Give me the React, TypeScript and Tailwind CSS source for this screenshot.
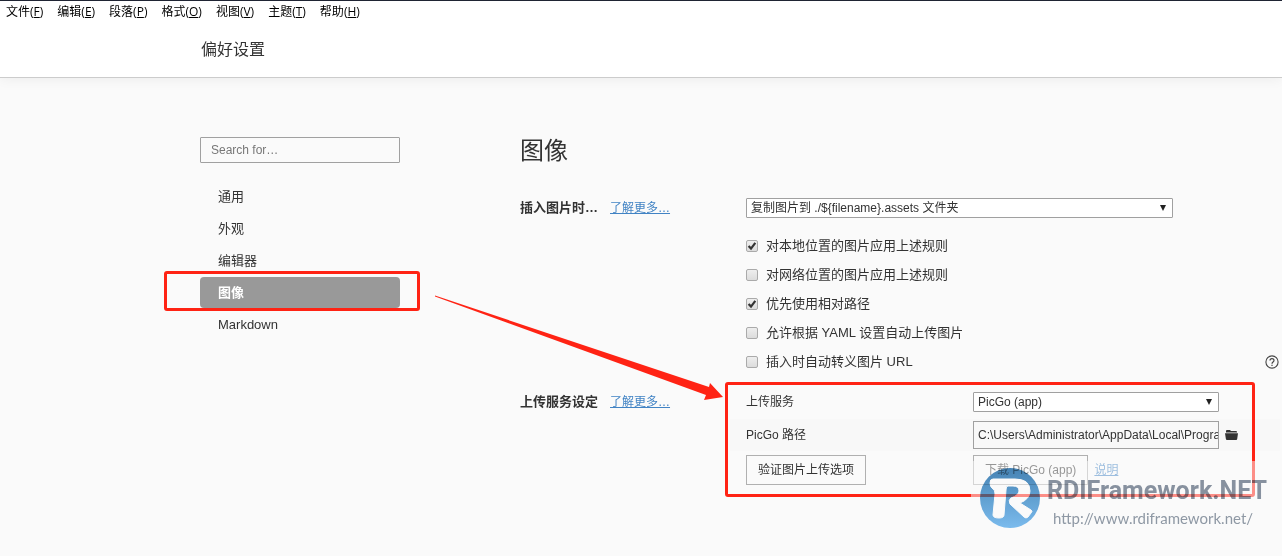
import { useId, useState } from "react";
import type { ReactNode } from "react";

const menus = [
  { label: "文件", hotkey: "F" },
  { label: "编辑", hotkey: "E" },
  { label: "段落", hotkey: "P" },
  { label: "格式", hotkey: "O" },
  { label: "视图", hotkey: "V" },
  { label: "主题", hotkey: "T" },
  { label: "帮助", hotkey: "H" },
];

const sections = ["通用", "外观", "编辑器", "图像", "Markdown"];

const rules = [
  { label: "对本地位置的图片应用上述规则", checked: true },
  { label: "对网络位置的图片应用上述规则", checked: false },
  { label: "优先使用相对路径", checked: true },
  { label: "允许根据 YAML 设置自动上传图片", checked: false },
  { label: "插入时自动转义图片 URL", checked: false, help: true },
];

function MenuBar() {
  return (
    <nav className="flex h-[23px] items-center gap-3.5 border-t border-[#1f2433] pl-1.5 font-['Open_Sans','Noto_Sans_CJK_SC',sans-serif] text-xs text-black">
      {menus.map((menu) => (
        <button key={menu.hotkey} type="button" className="whitespace-nowrap">
          {menu.label}(<span className="underline">{menu.hotkey}</span>)
        </button>
      ))}
    </nav>
  );
}

function Sidebar() {
  const [active, setActive] = useState("图像");

  return (
    <aside className="w-[200px] shrink-0">
      <input
        type="search"
        aria-label="Search"
        placeholder="Search for…"
        className="h-[26px] w-full rounded-[1px] border border-[#a0a0a0] bg-transparent px-2.5 text-xs placeholder:text-[#777]"
      />
      <ul className="mt-[18px] flex flex-col gap-px">
        {sections.map((section) => (
          <li key={section} className="relative">
            <button
              type="button"
              onClick={() => setActive(section)}
              className={`h-[31px] w-full rounded px-[18px] text-left ${
                section === active ? "bg-[#999] font-bold text-white" : ""
              }`}
            >
              {section}
            </button>
            {section === active && (
              <span className="pointer-events-none absolute -top-1.5 -right-5 -bottom-[3px] -left-9 rounded-[3px] border-3 border-[#ff2314]" />
            )}
          </li>
        ))}
      </ul>
    </aside>
  );
}

function Select({
  label,
  value,
  className,
}: {
  label: string;
  value: string;
  className: string;
}) {
  return (
    <span className={`relative block ${className}`}>
      <select
        aria-label={label}
        className="block h-5 w-full appearance-none rounded-[1px] border border-[#a0a0a0] bg-white px-1 text-xs leading-[18px]"
      >
        <option>{value}</option>
      </select>
      <svg
        viewBox="0 0 6 6"
        className="pointer-events-none absolute top-[7px] right-[7px] size-1.5 fill-[#222]"
      >
        <path d="M0 0h6L3 6z" />
      </svg>
    </span>
  );
}

function Rule({
  label,
  checked,
  help,
}: {
  label: string;
  checked: boolean;
  help?: boolean;
}) {
  const id = useId();

  return (
    <div className="flex h-[29px] items-center">
      <span className="relative size-3">
        <input
          id={id}
          type="checkbox"
          defaultChecked={checked}
          className="peer block size-3 appearance-none rounded-xs border border-[#aaa] bg-linear-to-b from-[#eee] to-[#dcdcdc]"
        />
        <svg
          viewBox="0 0 12 12"
          className="pointer-events-none absolute inset-0 hidden size-3 peer-checked:block"
        >
          <path d="M2.6 6 5 8.6 9.3 2.8" fill="none" stroke="#333" strokeWidth="2.2" />
        </svg>
      </span>
      <label htmlFor={id} className="pl-2">
        {label}
      </label>
      {help && (
        <button type="button" aria-label="帮助" className="mr-[3px] ml-auto">
          <svg viewBox="0 0 14 14" className="size-3.5" fill="none" stroke="#444">
            <circle cx="7" cy="7" r="6.1" strokeWidth="1.1" />
            <path
              d="M5 5.6c0-2.7 4-2.6 4-.2C9 7 7 7 7 8.7M7 9.7v1.3"
              strokeWidth="1.2"
            />
          </svg>
        </button>
      )}
    </div>
  );
}

function SettingGroup({ title, children }: { title: string; children: ReactNode }) {
  return (
    <section className="flex">
      <div className="flex h-5 w-[226px] shrink-0 items-center gap-3">
        <h2 className="font-bold">{title}</h2>
        <a href="#more" className="text-xs text-[#4183c4] underline">
          了解更多…
        </a>
      </div>
      <div className="min-w-0 flex-1">{children}</div>
    </section>
  );
}

function UploadService() {
  return (
    <div className="relative text-xs">
      <div className="flex h-[27px] items-start">
        <span className="w-[227px] shrink-0 leading-5">上传服务</span>
        <Select label="上传服务" value="PicGo (app)" className="w-[246px]" />
      </div>
      <div className="mr-0.5 -ml-4 flex h-8 items-center bg-[#f8f8f8] pl-4">
        <label htmlFor="picgo-path" className="w-[227px] shrink-0">
          PicGo 路径
        </label>
        <input
          id="picgo-path"
          defaultValue="C:\Users\Administrator\AppData\Local\Programs\PicGo\PicGo.exe"
          className="h-7 w-[246px] border border-[#a0a0a0] bg-transparent pl-1"
        />
        <button type="button" aria-label="选择文件" className="ml-1.5">
          <svg viewBox="0 0 13 10" className="h-2.5 w-[13px] fill-[#333]">
            <path d="M1 1q0-1 1-1h3l1 1h5q1 0 1 1v.5H1zM0 3.2h13L12.2 9q-.1 1-1.1 1H2Q1 10 .9 9z" />
          </svg>
        </button>
      </div>
      <div className="flex h-[38px] items-center">
        <div className="w-[227px] shrink-0">
          <button type="button" className="h-[30px] border border-[#b0b0b0] px-[11px]">
            验证图片上传选项
          </button>
        </div>
        <button type="button" className="h-[30px] border border-[#b0b0b0] px-[11px]">
          下载 PicGo (app)
        </button>
        <a href="#help" className="ml-1.5 text-[#4183c4] underline">
          说明
        </a>
      </div>
      <span className="pointer-events-none absolute -top-2.5 -bottom-2 -left-[21px] w-[530px] rounded-[3px] border-3 border-[#ff2314]" />
    </div>
  );
}

function Watermark() {
  return (
    <div className="pointer-events-none absolute top-[461px] right-2.5 flex h-[74px] w-[301px] items-center bg-[#fafafa]/50 pl-2">
      <svg viewBox="0 0 62 62" className="size-[62px] shrink-0 mix-blend-multiply">
        <defs>
          <linearGradient id="badge" x1="0" y1="0" x2="0" y2="1">
            <stop offset="0" stopColor="#4786b8" />
            <stop offset="1" stopColor="#7dbff2" />
          </linearGradient>
        </defs>
        <circle cx="31" cy="31" r="30" fill="url(#badge)" />
        <path
          d="M14 12h22q15 0 15 12 0 8-10 12l11 7q2 1 0 3l-3 4q-2 2-4 0L31 37q-2-4 1-6 8-3 8-7 0-5-6-5h-5q-2 0-2 4l-2 25q0 3-5 3-6 0-6-3l2-21q0-4-2-5-3-2-3-6 0-4 3-4z"
          fill="#fff"
          stroke="#fff"
          strokeWidth="1"
        />
      </svg>
      <div className="pt-3 pl-1.5">
        <p className="font-['Roboto',sans-serif] text-[25px] leading-7 font-bold whitespace-nowrap text-[#8a94a2] mix-blend-multiply">
          RDIFramework.NET
        </p>
        <p className="pl-1.5 font-['Lato',sans-serif] text-[15px] leading-[26px] whitespace-nowrap text-[#8e98a4]">
          http://www.rdiframework.net/
        </p>
      </div>
    </div>
  );
}

export default function App() {
  return (
    <div className="relative min-h-screen bg-[#fafafa] font-['Liberation_Sans','Noto_Sans_CJK_SC',sans-serif] text-[13px] text-[#333]">
      <header className="border-b border-[#ccc] bg-white shadow-[0_1px_12px_rgba(0,0,0,0.06)]">
        <MenuBar />
        <h1 className="flex h-[54px] items-center pl-[201px] text-base">偏好设置</h1>
      </header>

      <div className="flex min-h-[478px] gap-[120px] pt-[59px] pl-[200px]">
        <Sidebar />
        <main className="min-w-0 flex-1">
          <h1 className="h-[61px] text-2xl leading-7">图像</h1>
          <SettingGroup title="插入图片时…">
            <Select
              label="插入图片时"
              value="复制图片到 ./${filename}.assets 文件夹"
              className="w-[427px]"
            />
            <div className="pt-[13px] pb-4">
              {rules.map((rule) => (
                <Rule key={rule.label} {...rule} />
              ))}
            </div>
          </SettingGroup>
          <SettingGroup title="上传服务设定">
            <UploadService />
          </SettingGroup>
        </main>
      </div>

      <svg
        viewBox="0 0 290 108"
        className="pointer-events-none absolute top-[294px] left-[434px] h-[108px] w-[290px] fill-[#ff2314]"
      >
        <path d="M1 1.5 275 93 276 89 289 103 270 106 272 101 1 2.5z" />
      </svg>

      <Watermark />
    </div>
  );
}
